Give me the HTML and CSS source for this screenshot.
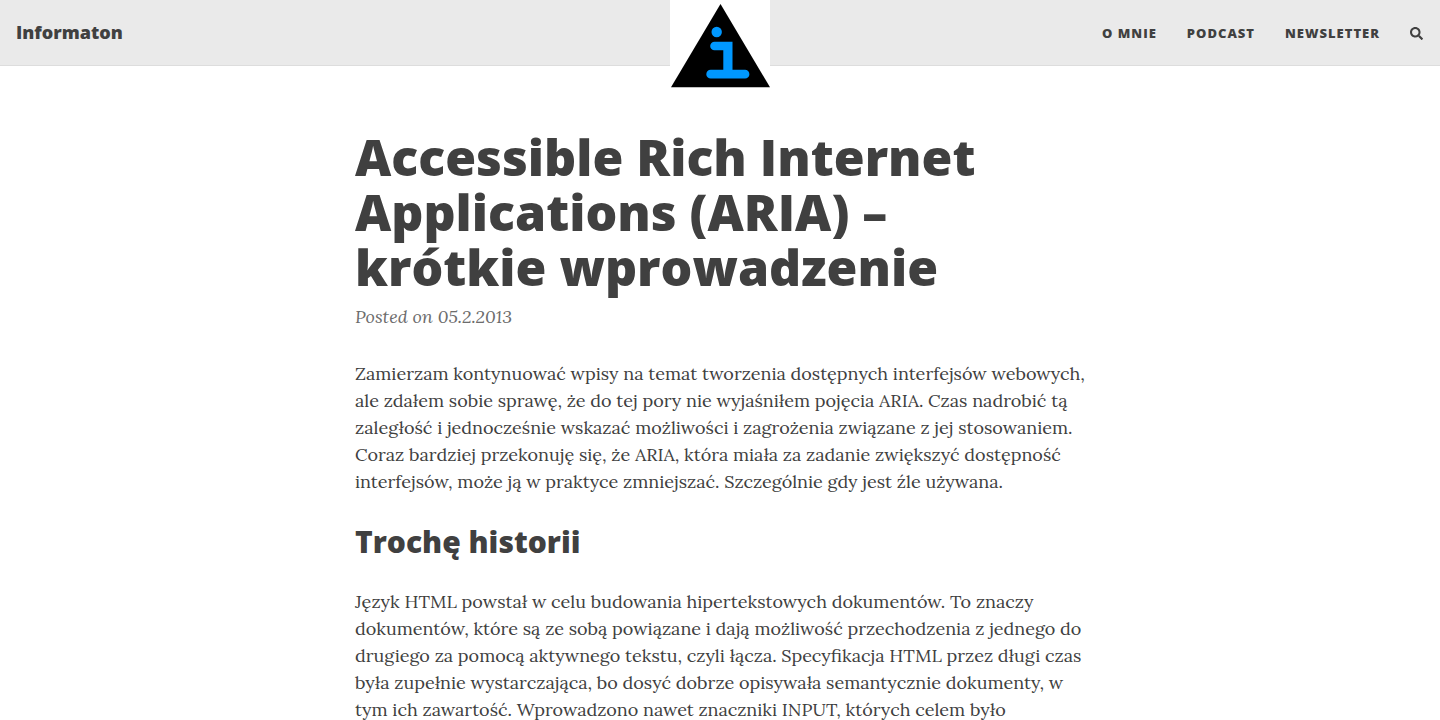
FILE: index.html
```html
<!DOCTYPE html>
<html lang="pl">
<head>
<meta charset="utf-8">
<meta name="viewport" content="width=device-width, initial-scale=1">
<title>Accessible Rich Internet Applications (ARIA) – krótkie wprowadzenie</title>
<link rel="stylesheet" href="styles.css">
</head>
<body>
<header class="navbar">
  <a class="brand" href="#">Informaton</a>
  <nav class="menu">
    <a href="#">O mnie</a>
    <a href="#">Podcast</a>
    <a href="#">Newsletter</a>
    <button class="search" type="button" aria-label="Szukaj">
      <svg viewBox="0 0 512 512" width="13" height="13" aria-hidden="true"><path fill="currentColor" d="M505 442.700 405.300 343c-4.500-4.500-10.600-7-17-7H372c27.600-35.300 44-79.700 44-128C416 93.100 322.900 0 208 0S0 93.100 0 208s93.100 208 208 208c48.300 0 92.700-16.400 128-44v16.300c0 6.400 2.500 12.500 7 17l99.700 99.700c9.400 9.400 24.600 9.400 33.900 0l28.300-28.300c9.400-9.400 9.400-24.600.1-34zM208 336c-70.700 0-128-57.200-128-128 0-70.700 57.200-128 128-128 70.700 0 128 57.200 128 128 0 70.700-57.200 128-128 128z"/></svg>
    </button>
  </nav>
  <a class="avatar" href="#" aria-label="Strona główna">
    <svg viewBox="0 0 100 100" width="100" height="100" aria-hidden="true">
      <rect width="100" height="100" fill="#fff"/>
      <path d="M50.500 4 100 87.300H1z" fill="#000"/>
      <g fill="#0098ff">
        <circle cx="46.700" cy="32" r="5.200"/>
        <path d="M44.500 41.700H62.500V69.800H75a4.400 4.400 0 0 1 0 8.800H40.700a4.400 4.400 0 0 1 0-8.800H53.300V50.300H44.500a4.300 4.300 0 0 1 0-8.600z"/>
      </g>
    </svg>
  </a>
</header>
<main class="article">
  <h1 class="title">Accessible Rich Internet Applications (ARIA) – krótkie wprowadzenie</h1>
  <p class="meta">Posted on 05.2.2013</p>
  <p class="text">Zamierzam kontynuować wpisy na temat tworzenia dostępnych interfejsów webowych, ale zdałem sobie sprawę, że do tej pory nie wyjaśniłem pojęcia ARIA. Czas nadrobić tą zaległość i jednocześnie wskazać możliwości i zagrożenia związane z jej stosowaniem. Coraz bardziej przekonuję się, że ARIA, która miała za zadanie zwiększyć dostępność interfejsów, może ją w praktyce zmniejszać. Szczególnie gdy jest źle używana.</p>
  <h2 class="subtitle">Trochę historii</h2>
  <p class="text">Język HTML powstał w celu budowania hipertekstowych dokumentów. To znaczy dokumentów, które są ze sobą powiązane i dają możliwość przechodzenia z jednego do drugiego za pomocą aktywnego tekstu, czyli łącza. Specyfikacja HTML przez długi czas była zupełnie wystarczająca, bo dosyć dobrze opisywała semantycznie dokumenty, w tym ich zawartość. Wprowadzono nawet znaczniki INPUT, których celem było</p>
</main>
</body>
</html>
```
FILE: styles.css
```css
* {
  box-sizing: border-box;
}

body {
  margin: 0;
  background: #fff;
  color: #404040;
  font-family: "Lora", "Liberation Serif", serif;
  font-size: 18px;
  line-height: 27px;
  overflow: hidden;
}

.navbar {
  position: relative;
  display: flex;
  align-items: center;
  justify-content: space-between;
  padding: 18px 17px 18px 16px;
  background: #eaeaea;
  border-bottom: 1px solid #ddd;
  font-family: "Open Sans", sans-serif;
}

.navbar a {
  color: #404040;
  text-decoration: none;
}

.brand {
  font-size: 18px;
  font-weight: 800;
}

.menu {
  display: flex;
  align-items: center;
  gap: 30px;
  padding-top: 2px;
}

.menu a {
  font-size: 13px;
  font-weight: 800;
  letter-spacing: 1px;
  text-transform: uppercase;
}

.search {
  display: flex;
  padding: 0;
  border: 0;
  background: none;
  color: #404040;
}

.avatar {
  position: absolute;
  top: 0;
  left: 50%;
  width: 100px;
  margin-left: -50px;
}

.avatar svg {
  display: block;
}

.article {
  max-width: 762px;
  margin: 0 auto;
  padding: 64px 16px 0;
}

.title {
  margin: 0;
  font-family: "Open Sans", sans-serif;
  font-size: 50px;
  font-weight: 800;
  line-height: 55px;
}

.meta {
  margin: 8px 0 30px;
  color: #6c6c6c;
  font-style: italic;
}

.text {
  margin: 0;
}

.subtitle {
  margin: 29px 0 28px;
  font-family: "Open Sans", sans-serif;
  font-size: 30px;
  font-weight: 800;
  line-height: 36px;
}
```
